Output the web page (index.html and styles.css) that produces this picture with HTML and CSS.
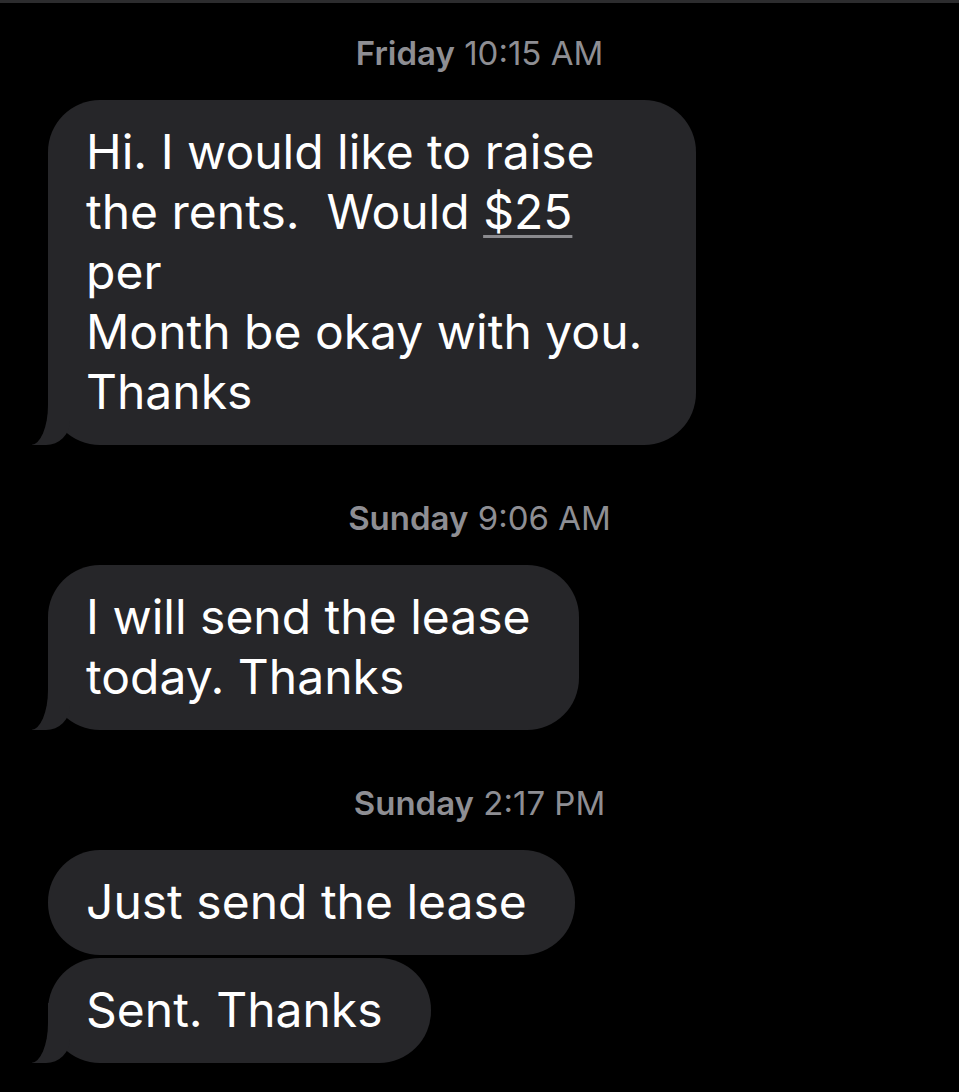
FILE: index.html
```html
<!DOCTYPE html>
<html lang="en">
<head>
    <meta charset="UTF-8">
    <meta name="viewport" content="width=device-width, initial-scale=1.0">
    <title>Messages</title>
    <link rel="stylesheet" href="styles.css">
</head>
<body>
    <div class="thread">
        <div class="stamp"><b>Friday</b> 10:15 AM</div>
        <div class="bubble full tail">
            Hi. I would like to raise<br>
            the rents.&nbsp; Would <span class="link">$25</span><br>
            per<br>
            Month be okay with you.<br>
            Thanks
        </div>

        <div class="stamp"><b>Sunday</b> 9:06 AM</div>
        <div class="bubble tail">
            I will send the lease<br>
            today. Thanks
        </div>

        <div class="stamp"><b>Sunday</b> 2:17 PM</div>
        <div class="group">
            <div class="bubble">Just send the lease</div>
            <div class="bubble tail">Sent. Thanks</div>
        </div>
    </div>
</body>
</html>
```

FILE: styles.css
```css
:root {
    --bg: #000000;
    --bubble: #262629;
    --text: #ffffff;
    --muted: #8e8e93;
    --bar: #2c2c2e;
}

* {
    margin: 0;
    padding: 0;
    box-sizing: border-box;
}

body {
    background: var(--bg);
    color: var(--text);
    font-family: 'Inter', 'Roboto', sans-serif;
    border-top: 3px solid var(--bar);
    min-height: 100vh;
}

.thread {
    display: flex;
    flex-direction: column;
    align-items: flex-start;
    padding: 0 48px 30px;
}

.stamp {
    align-self: stretch;
    text-align: center;
    color: var(--muted);
    font-size: 33px;
    line-height: 36px;
    margin: 55px 0 29px;
}

.stamp:first-child {
    margin-top: 32px;
}

.stamp b {
    font-weight: 600;
}

.group {
    display: flex;
    flex-direction: column;
    align-items: flex-start;
    gap: 3px;
}

.bubble {
    position: relative;
    z-index: 0;
    background: var(--bubble);
    border-radius: 52px;
    padding: 22px 48px 23px 38px;
    font-size: 48px;
    line-height: 60px;
    white-space: nowrap;
}

.bubble.full {
    width: 648px;
}

/* tail: a rounded block under the corner, cut by a black one */
.bubble.tail::before {
    content: "";
    position: absolute;
    z-index: -1;
    left: -16px;
    bottom: 0;
    width: 38px;
    height: 60px;
    background: var(--bubble);
    border-bottom-right-radius: 24px;
}

.bubble.tail::after {
    content: "";
    position: absolute;
    z-index: -1;
    left: -30px;
    bottom: 0;
    width: 30px;
    height: 60px;
    background: var(--bg);
    border-bottom-right-radius: 17px 40px;
}

.link {
    text-decoration: underline;
    text-decoration-color: #8a8a8e;
    text-decoration-thickness: 3px;
    text-underline-offset: 6px;
}
```
